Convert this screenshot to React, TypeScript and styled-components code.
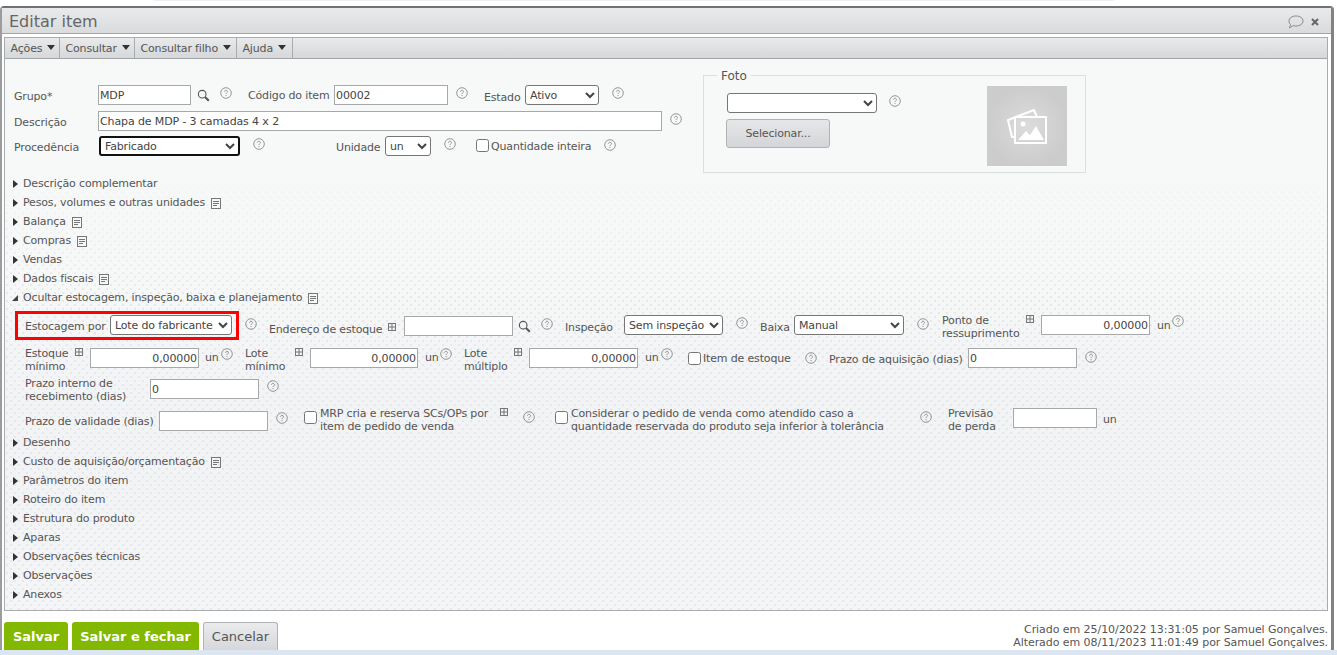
import React from "react";
import styled, { createGlobalStyle, css } from "styled-components";

const Global = createGlobalStyle`
  html, body { margin: 0; padding: 0; background: #fff; overflow: hidden; }
  body { font-family: "DejaVu Sans", Verdana, sans-serif; font-size: 11px; color: #555; letter-spacing: -0.16px; }
`;

type Place = { $ml?: number; $t?: number; $w?: number };
const place = css<Place>`
  flex: none;
  margin-left: ${(p) => p.$ml ?? 0}px;
  margin-top: ${(p) => p.$t ?? 0}px;
  ${(p) => (p.$w !== undefined ? `width: ${p.$w}px;` : "")}
`;

const Page = styled.div`
  width: 1337px;
  height: 655px;
  display: flex;
  flex-direction: column;
  overflow: hidden;
  background: #fff;
`;
const TopStrip = styled.div`
  height: 6px;
  flex: none;
  display: flex;
  justify-content: center;
`;
const TopStripInner = styled.div`
  width: 960px;
  height: 1px;
  margin-left: -70px;
  background: #efefef;
`;
const Window = styled.div`
  width: 1334px;
  height: 644px;
  box-sizing: border-box;
  flex: none;
  border-top: 2px solid #6f7274;
  border-left: 2px solid #9a9c9e;
  border-right: 3px solid #808284;
  border-radius: 4px 4px 0 0;
  background: #fff;
  display: flex;
  flex-direction: column;
`;
const TitleBar = styled.div`
  height: 26px;
  flex: none;
  box-sizing: border-box;
  border-bottom: 1px solid #a3a6a8;
  background: linear-gradient(#e9eaec, #d9dbdd);
  display: flex;
  align-items: center;
  padding: 3px 12px 0 7px;
`;
const Title = styled.div`
  font-size: 16px;
  letter-spacing: 0;
  color: #666;
  flex: 1;
  line-height: 20px;
`;
const TitleIcons = styled.div`
  display: flex;
  align-items: center;
  gap: 7px;
`;
const Panel = styled.div`
  margin: 3px 3px 0 2px;
  height: 574px;
  box-sizing: border-box;
  flex: none;
  border: 1px solid #a9acae;
  display: flex;
  flex-direction: column;
  overflow: hidden;
`;
const Toolbar = styled.div`
  height: 21px;
  flex: none;
  box-sizing: border-box;
  border-bottom: 1px solid #a3a6a8;
  background: linear-gradient(#e9eaec, #d5d7d9);
  display: flex;
`;
const MenuItem = styled.div<{ $w: number }>`
  width: ${(p) => p.$w}px;
  box-sizing: border-box;
  border-right: 1px solid #a9acae;
  padding-left: 5.5px;
  display: flex;
  align-items: center;
  gap: 5px;
  color: #555;
  font-size: 11px;
  white-space: nowrap;
`;
const Caret = styled.span`
  width: 0;
  height: 0;
  border-left: 4px solid transparent;
  border-right: 4px solid transparent;
  border-top: 5px solid #333;
  margin-top: -2px;
`;
const Body = styled.div`
  flex: 1;
  min-height: 0;
  padding: 16px 0 0 9px;
  background-color: #f4f5f6;
  background-image:
    linear-gradient(#f7f9f8 0, #f7f9f8 100px, rgba(246, 248, 247, 0) 240px),
    radial-gradient(circle at 2px 2px, rgba(226, 228, 231, 0.8) 0.8px, transparent 1.3px),
    radial-gradient(circle at 6px 6px, rgba(226, 228, 231, 0.8) 0.8px, transparent 1.3px),
    linear-gradient(#f7f9f8 0, #f6f8f7 230px, #f3f4f6 300px, #f2f3f5 400px, #f4f5f6 100%);
  background-size: 100% 100%, 8px 8px, 8px 8px, 100% 100%;
`;
const TopSection = styled.div`
  height: 99px;
  display: flex;
`;
const TopFields = styled.div`
  width: 689px;
  flex: none;
  padding-top: 10px;
`;
const Row = styled.div<{ $h: number }>`
  height: ${(p) => p.$h}px;
  display: flex;
  align-items: flex-start;
`;
const Label = styled.div<Place>`
  ${place}
  line-height: 20px;
  white-space: nowrap;
  color: #555;
`;
const Multi = styled.div<Place>`
  ${place}
  line-height: 13px;
  color: #555;
  white-space: nowrap;
`;
const TextInput = styled.input<Place & { $right?: boolean }>`
  ${place}
  height: 20px;
  box-sizing: border-box;
  border: 1px solid #a6a8aa;
  background: #fff;
  padding: 0 1px;
  margin-bottom: 0;
  margin-right: 0;
  font: 11px "DejaVu Sans", Verdana, sans-serif;
  letter-spacing: -0.12px;
  color: #444;
  text-align: ${(p) => (p.$right ? "right" : "left")};
  outline: none;
`;
const Select = styled.select<Place & { $focus?: boolean }>`
  ${place}
  height: 20px;
  box-sizing: border-box;
  margin-right: 0;
  margin-bottom: 0;
  background: #fff;
  font: 11px "DejaVu Sans", Verdana, sans-serif;
  letter-spacing: -0.16px;
  color: #444;
  border: ${(p) => (p.$focus ? "2px solid #111" : "1px solid #767676")};
  border-radius: 3px;
  padding: 0;
`;
const Check = styled.input.attrs({ type: "checkbox" })<Place>`
  ${place}
  width: 13px;
  height: 13px;
  margin-right: 0;
  margin-bottom: 0;
`;
const IconWrap = styled.span<Place>`
  ${place}
  display: block;
  line-height: 0;
`;
const HelpIcon = ({ $ml, $t }: Place) => (
  <IconWrap $ml={$ml} $t={$t} $w={12}>
    <svg width="12" height="12" viewBox="0 0 12 12" fill="none" stroke="#8a8a8a" strokeWidth="0.9">
      <circle cx="6" cy="6" r="5.3" />
      <path d="M4.5 4.8c0-1 .7-1.5 1.5-1.5s1.5.5 1.5 1.3c0 1.1-1.5 1.2-1.5 2.4M6 8v1" />
    </svg>
  </IconWrap>
);
const SearchIcon = ({ $ml, $t }: Place) => (
  <IconWrap $ml={$ml} $t={$t} $w={13}>
    <svg width="13" height="13" viewBox="0 0 13 13" fill="none" stroke="#555">
      <circle cx="5.2" cy="5.2" r="3.8" strokeWidth="1.1" />
      <path d="M8 8l3.8 3.8" strokeWidth="2" />
    </svg>
  </IconWrap>
);
const GridIcon = ({ $ml, $t }: Place) => (
  <IconWrap $ml={$ml} $t={$t} $w={8}>
    <svg width="8" height="8" viewBox="0 0 8 8" fill="none" stroke="#777">
      <rect x="0.5" y="0.5" width="7" height="7" />
      <path d="M4 0v8M0 4h8" />
    </svg>
  </IconWrap>
);
const DocWrap = styled.span`
  margin-left: 6px;
  line-height: 0;
  margin-top: 2px;
`;
const DocIcon = () => (
  <DocWrap>
    <svg width="10" height="11" viewBox="0 0 10 11" fill="none" stroke="#777">
      <rect x="0.5" y="0.5" width="9" height="10" />
      <path d="M2 3.5h6M2 5.5h6M2 7.5h4" />
    </svg>
  </DocWrap>
);
const Unit = styled(Label)``;

const Foto = styled.fieldset`
  margin: -7px 0 0 0;
  padding: 0 0 0 23px;
  width: 383px;
  height: 105px;
  box-sizing: border-box;
  border: 1px solid #dcdfe0;
  min-width: 0;
  display: flex;
`;
const FotoLegend = styled.legend`
  font-size: 12px;
  letter-spacing: 0;
  color: #555;
  margin-left: -10px;
  padding: 1px 4px 0;
  line-height: 14px;
`;
const FotoLeft = styled.div`
  width: 260px;
  flex: none;
  padding-top: 10px;
`;
const SelectButton = styled.button`
  display: block;
  margin: 6px 0 0 -1px;
  width: 104px;
  height: 29px;
  border: 1px solid #b0b2b4;
  border-radius: 3px;
  background: linear-gradient(#e6e7e9, #d4d5d8);
  font: 11px "DejaVu Sans", Verdana, sans-serif;
  letter-spacing: -0.16px;
  color: #555;
  padding: 0;
`;
const Placeholder = styled.div`
  width: 80px;
  height: 80px;
  margin-top: 3px;
  background: radial-gradient(circle, #dcdcdc 0, #cccccc 70%);
  display: flex;
  align-items: center;
  justify-content: center;
`;
const Accordion = styled.div`
  height: 19px;
  margin-left: -1px;
  display: flex;
  align-items: center;
  color: #555;
  white-space: nowrap;
`;
const ArrowClosed = styled.span`
  width: 0;
  height: 0;
  margin-right: 5px;
  border-top: 4.5px solid transparent;
  border-bottom: 4.5px solid transparent;
  border-left: 5px solid #333;
`;
const ArrowOpen = styled.span`
  width: 0;
  height: 0;
  margin-right: 5px;
  margin-left: -1px;
  border-left: 6px solid transparent;
  border-bottom: 6px solid #444;
`;
const Section = styled.div`
  padding: 4px 0 0 11px;
`;
const Highlight = styled.div`
  width: 224px;
  height: 29px;
  margin-left: -10px;
  flex: none;
  box-sizing: border-box;
  border: 3px solid #f00;
  padding-left: 7px;
  display: flex;
  align-items: flex-start;
`;
const Footer = styled.div`
  flex: 1;
  display: flex;
  justify-content: space-between;
  padding: 11px 3px 0 2px;
`;
const Buttons = styled.div`
  display: flex;
  gap: 4px;
`;
const Green = styled.button<{ $w: number }>`
  width: ${(p) => p.$w}px;
  height: 28px;
  border: none;
  border-radius: 3px 3px 0 0;
  background: #82b900;
  color: #fff;
  font: bold 13px "DejaVu Sans", Verdana, sans-serif;
  padding: 0;
`;
const Cancel = styled.button`
  width: 75px;
  height: 28px;
  border: 1px solid #b0b2b4;
  border-bottom: none;
  border-radius: 3px 3px 0 0;
  background: linear-gradient(#eaebed, #d6d7da);
  color: #555;
  font: 13px "DejaVu Sans", Verdana, sans-serif;
  padding: 0;
`;
const Audit = styled.div`
  text-align: right;
  line-height: 13px;
  color: #555;
  letter-spacing: -0.06px;
  padding-top: 1px;
`;
const BottomStrip = styled.div`
  height: 5px;
  flex: none;
  background: #dce6f2;
`;

const closedTop = [
  ["Descrição complementar", false],
  ["Pesos, volumes e outras unidades", true],
  ["Balança", true],
  ["Compras", true],
  ["Vendas", false],
  ["Dados fiscais", true],
] as const;
const closedBottom = [
  ["Desenho", false],
  ["Custo de aquisição/orçamentação", true],
  ["Parâmetros do item", false],
  ["Roteiro do item", false],
  ["Estrutura do produto", false],
  ["Aparas", false],
  ["Observações técnicas", false],
  ["Observações", false],
  ["Anexos", false],
] as const;

const Closed = ({ text, doc }: { text: string; doc: boolean }) => (
  <Accordion>
    <ArrowClosed />
    {text}
    {doc && <DocIcon />}
  </Accordion>
);

const Sel = ({ value, ...rest }: { value: string } & Place & { $focus?: boolean }) => (
  <Select {...rest} defaultValue={value}>
    <option>{value}</option>
  </Select>
);
const Inp = ({ value, ...rest }: { value: string } & Place & { $right?: boolean }) => (
  <TextInput {...rest} readOnly value={value} />
);

export default function App() {
  return (
    <Page>
      <Global />
      <TopStrip>
        <TopStripInner />
      </TopStrip>
      <Window>
        <TitleBar>
          <Title>Editar item</Title>
          <TitleIcons>
            <svg width="16" height="14" viewBox="0 0 16 14" fill="none" stroke="#8a8c8e">
              <path d="M8 1c4 0 7 2 7 5s-3 5-7 5c-1 0-2 0-3-.4L1.500 13l1-3.500C1.500 8.500 1 7.300 1 6c0-3 3-5 7-5z" />
            </svg>
            <svg width="8" height="8" viewBox="0 0 8 8" fill="none" stroke="#666" strokeWidth="2">
              <path d="M1 1l6 6M7 1l-6 6" />
            </svg>
          </TitleIcons>
        </TitleBar>
        <Panel>
          <Toolbar>
            <MenuItem $w={55}>Ações <Caret /></MenuItem>
            <MenuItem $w={75}>Consultar <Caret /></MenuItem>
            <MenuItem $w={102}>Consultar filho <Caret /></MenuItem>
            <MenuItem $w={56}>Ajuda <Caret /></MenuItem>
          </Toolbar>
          <Body>
            <TopSection>
              <TopFields>
                <Row $h={26}>
                  <Label $w={84} $t={2}>Grupo*</Label>
                  <Inp $w={93} value="MDP" />
                  <SearchIcon $ml={6} $t={4} />
                  <HelpIcon $ml={10} $t={2} />
                  <Label $ml={16} $w={86} $t={1}>Código do item</Label>
                  <Inp $w={114} value="00002" />
                  <HelpIcon $ml={8} $t={2} />
                  <Label $ml={16} $w={41} $t={3}>Estado</Label>
                  <Sel $w={74} value="Ativo" />
                  <HelpIcon $ml={13} $t={2} />
                </Row>
                <Row $h={25}>
                  <Label $w={84} $t={2}>Descrição</Label>
                  <Inp $w={564} value="Chapa de MDP - 3 camadas 4 x 2" />
                  <HelpIcon $ml={8} $t={2} />
                </Row>
                <Row $h={20}>
                  <Label $w={85} $t={2}>Procedência</Label>
                  <Sel $w={141} $focus value="Fabricado" />
                  <HelpIcon $ml={13} $t={2} />
                  <Label $ml={71} $w={49} $t={2}>Unidade</Label>
                  <Sel $w={46} value="un" />
                  <HelpIcon $ml={13} $t={2} />
                  <Check $ml={20} $t={3} />
                  <Label $ml={2} $w={113} $t={1}>Quantidade inteira</Label>
                  <HelpIcon $t={3} />
                </Row>
              </TopFields>
              <Foto>
                <FotoLegend>Foto</FotoLegend>
                <FotoLeft>
                  <Row $h={20}>
                    <Sel $w={150} value="" />
                    <HelpIcon $ml={12} $t={2} />
                  </Row>
                  <SelectButton>Selecionar...</SelectButton>
                </FotoLeft>
                <Placeholder>
                  <svg width="42" height="38" viewBox="0 0 42 38" fill="none" stroke="#fff" strokeWidth="2">
                    <path d="M9 30H6L2 13 28 3l3 7" />
                    <rect x="9" y="10" width="31" height="26" />
                    <circle cx="17" cy="17" r="2.500" fill="#fff" stroke="none" />
                    <path d="M12 33l8-9 4 4 6-9 8 14z" fill="#fff" stroke="none" />
                  </svg>
                </Placeholder>
              </Foto>
            </TopSection>
            {closedTop.map(([t, d]) => (
              <Closed key={t} text={t} doc={d} />
            ))}
            <Accordion>
              <ArrowOpen />
              Ocultar estocagem, inspeção, baixa e planejamento
              <DocIcon />
            </Accordion>
            <Section>
              <Row $h={36}>
                <Highlight>
                  <Label $w={85} $t={3}>Estocagem por</Label>
                  <Sel $w={122} $t={1} value="Lote do fabricante" />
                </Highlight>
                <HelpIcon $ml={6} $t={7} />
                <Label $ml={12} $w={119} $t={9}>Endereço de estoque</Label>
                <GridIcon $t={12} />
                <Inp $ml={8} $w={109} $t={5} value="" />
                <SearchIcon $ml={5} $t={9} />
                <HelpIcon $ml={10} $t={7} />
                <Label $ml={12} $w={59} $t={7}>Inspeção</Label>
                <Sel $w={99} $t={4} value="Sem inspeção" />
                <HelpIcon $ml={13} $t={6} />
                <Label $ml={12} $w={34} $t={7}>Baixa</Label>
                <Sel $w={110} $t={4} value="Manual" />
                <HelpIcon $ml={13} $t={7} />
                <Multi $ml={13} $w={84} $t={3}>Ponto de<br />ressuprimento</Multi>
                <GridIcon $t={4} />
                <Inp $ml={7} $w={109} $t={4} $right value="0,00000" />
                <Unit $ml={7} $w={15} $t={5}>un</Unit>
                <HelpIcon $t={4} />
              </Row>
              <Row $h={30}>
                <Multi $w={50}>Estoque<br />mínimo</Multi>
                <GridIcon $t={1} />
                <Inp $ml={7} $w={109} $t={1} $right value="0,00000" />
                <Unit $ml={6} $w={15} $t={1}>un</Unit>
                <HelpIcon $ml={1} $t={1} />
                <Multi $ml={12} $w={50}>Lote<br />mínimo</Multi>
                <GridIcon $t={1} />
                <Inp $ml={7} $w={108} $t={1} $right value="0,00000" />
                <Unit $ml={7} $w={15} $t={1}>un</Unit>
                <HelpIcon $t={1} />
                <Multi $ml={12} $w={50}>Lote<br />múltiplo</Multi>
                <GridIcon $t={1} />
                <Inp $ml={7} $w={109} $t={1} $right value="0,00000" />
                <Unit $ml={7} $w={15} $t={1}>un</Unit>
                <HelpIcon $ml={1} $t={1} />
                <Check $ml={15} $t={5} />
                <Label $ml={2} $w={102} $t={2}>Item de estoque</Label>
                <HelpIcon $t={5} />
                <Label $ml={12} $w={139} $t={3}>Prazo de aquisição (dias)</Label>
                <Inp $w={109} $t={1} value="0" />
                <HelpIcon $ml={8} $t={4} />
              </Row>
              <Row $h={30}>
                <Multi $w={125}>Prazo interno de<br />recebimento (dias)</Multi>
                <Inp $w={109} $t={2} value="0" />
                <HelpIcon $ml={8} $t={3} />
              </Row>
              <Row $h={26}>
                <Label $w={134} $t={5}>Prazo de validade (dias)</Label>
                <Inp $w={109} $t={4} value="" />
                <HelpIcon $ml={8} $t={5} />
                <Check $ml={16} $t={4} />
                <Multi $ml={3} $w={180}>MRP cria e reserva SCs/OPs por<br />item de pedido de venda</Multi>
                <GridIcon $t={1} />
                <HelpIcon $ml={15} $t={4} />
                <Check $ml={20} $t={4} />
                <Multi $ml={3} $w={349}>Considerar o pedido de venda como atendido caso a<br />quantidade reservada do produto seja inferior à tolerância</Multi>
                <HelpIcon $t={4} />
                <Multi $ml={16} $w={65}>Previsão<br />de perda</Multi>
                <Inp $w={84} $t={1} value="" />
                <Unit $ml={6} $t={3}>un</Unit>
              </Row>
            </Section>
            {closedBottom.map(([t, d]) => (
              <Closed key={t} text={t} doc={d} />
            ))}
          </Body>
        </Panel>
        <Footer>
          <Buttons>
            <Green $w={64}>Salvar</Green>
            <Green $w={127}>Salvar e fechar</Green>
            <Cancel>Cancelar</Cancel>
          </Buttons>
          <Audit>
            Criado em 25/10/2022 13:31:05 por Samuel Gonçalves.
            <br />
            Alterado em 08/11/2023 11:01:49 por Samuel Gonçalves.
          </Audit>
        </Footer>
      </Window>
      <BottomStrip />
    </Page>
  );
}
